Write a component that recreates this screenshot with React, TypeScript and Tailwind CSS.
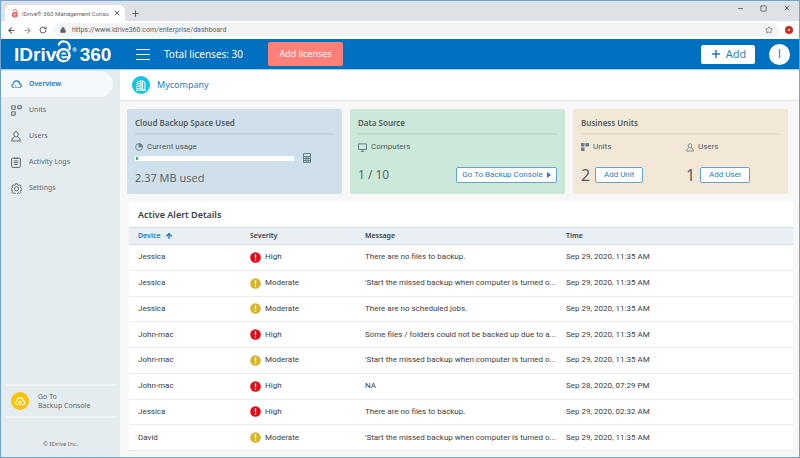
import type { ReactNode, SVGProps } from "react";
import { ArrowLeft, ArrowRight, ArrowUp, Lock, Minus, Plus, RotateCw, Square, Star, X } from "lucide-react";

type Severity = "High" | "Moderate";

const alerts: { device: string; severity: Severity; message: string; time: string }[] = [
  { device: "Jessica", severity: "High", message: "There are no files to backup.", time: "Sep 29, 2020, 11:35 AM" },
  { device: "Jessica", severity: "Moderate", message: "'Start the missed backup when computer is turned o...", time: "Sep 29, 2020, 11:35 AM" },
  { device: "Jessica", severity: "Moderate", message: "There are no scheduled jobs.", time: "Sep 29, 2020, 11:35 AM" },
  { device: "John-mac", severity: "High", message: "Some files / folders could not be backed up due to a...", time: "Sep 29, 2020, 11:35 AM" },
  { device: "John-mac", severity: "Moderate", message: "'Start the missed backup when computer is turned o...", time: "Sep 29, 2020, 11:35 AM" },
  { device: "John-mac", severity: "High", message: "NA", time: "Sep 28, 2020, 07:29 PM" },
  { device: "Jessica", severity: "High", message: "There are no files to backup.", time: "Sep 29, 2020, 02:32 AM" },
  { device: "David", severity: "Moderate", message: "'Start the missed backup when computer is turned o...", time: "Sep 29, 2020, 11:35 AM" },
];

function Icon(props: SVGProps<SVGSVGElement>) {
  return <svg fill="none" stroke="currentColor" aria-hidden="true" {...props} />;
}

const CloudDotsIcon = () => (
  <Icon viewBox="0 0 12 10" className="h-[9px] w-[11px] shrink-0" strokeWidth="1.2" strokeLinecap="round">
    <path d="M2.600 8.200C.2 7.600.3 4.800 2.600 4.500 2.600 2 4.200 1 6 1s3.200 1.200 3.400 3c2.200.3 2.600 3.500.4 4.200" />
    <path d="M4.500 8.400h.1M6.200 8.400h.1M8 8.400h.1M4.800 6.300h.1" />
  </Icon>
);

const UnitsIcon = () => (
  <Icon viewBox="0 0 11 11" className="h-[11px] w-[11px] shrink-0" strokeWidth="1.1">
    <rect x=".8" y=".8" width="3.400" height="3.400" rx=".6" />
    <rect x="6.800" y=".8" width="3.400" height="3" rx=".6" />
    <rect x=".8" y="6.800" width="3.400" height="3.400" rx=".6" />
  </Icon>
);

const UserIcon = ({ className }: { className: string }) => (
  <Icon viewBox="0 0 10 11" className={className} strokeWidth="1" strokeLinejoin="round">
    <ellipse cx="5" cy="3.300" rx="2.200" ry="2.700" />
    <path d="M3.600 5.600 1.300 7.300.7 10h8.600l-.6-2.700-2.300-1.700" />
  </Icon>
);

const ClipboardIcon = () => (
  <Icon viewBox="0 0 10 11" className="h-[11px] w-[10px] shrink-0" strokeWidth="1">
    <rect x=".7" y="1.200" width="8.600" height="9.200" rx=".8" />
    <path d="M3.200 1.200h3.600M2.700 4h4.600M2.700 5.800h4.600M3.400 7.600h3" />
  </Icon>
);

const GearIcon = () => (
  <Icon viewBox="0 0 24 24" className="h-[11px] w-[11px] shrink-0" strokeWidth="2" strokeLinejoin="round">
    <path d="M10 1.500h4l.6 3 2.300 1 2.600-1.700 2.800 2.800-1.700 2.600 1 2.300 2.400.5v3.500l-3 .5-1 2.100 1.600 2.400-2.800 2.800-2.500-1.700-2.100.9-.6 2.500h-3.800l-.6-2.600-2.200-1-2.400 1.700-2.800-2.800 1.700-2.500-.9-2-2.600-.6v-3.500l2.600-.5 1-2.200-1.700-2.500 2.800-2.800 2.500 1.700 2.100-1z" />
    <circle cx="12" cy="12.600" r="4.500" />
  </Icon>
);

const navItems: { label: string; icon: ReactNode; active?: boolean }[] = [
  { label: "Overview", icon: <CloudDotsIcon />, active: true },
  { label: "Units", icon: <UnitsIcon /> },
  { label: "Users", icon: <UserIcon className="h-[11px] w-[10px] shrink-0" /> },
  { label: "Activity Logs", icon: <ClipboardIcon /> },
  { label: "Settings", icon: <GearIcon /> },
];

function LockMark({ className, cutout }: { className: string; cutout: string }) {
  return (
    <svg viewBox="0 0 16 24" fill="none" className={className} aria-hidden="true">
      <path d="M2.500 5.500C3.500 2.600 6 1.200 8.500 1.500c4 .5 6 4 4.800 8.500" stroke="currentColor" strokeWidth="2.200" />
      <circle cx="7.500" cy="15.200" r="7.300" fill="currentColor" />
      <path d="M4 15.400h7.300c0-5.300-7.300-5.300-7.300 0 0 4 4.200 4.800 6.900 2.900" className={cutout} strokeWidth="1.700" />
    </svg>
  );
}

function BrowserChrome() {
  return (
    <div className="shrink-0 text-[7px] text-[#5f6368]">
      <div className="flex h-5 items-end bg-[#dee1e6] pl-1">
        <div className="flex h-4 w-[120px] items-center rounded-t-md bg-white pr-1 pl-[7px]">
          <LockMark className="h-[9px] w-1.5 shrink-0 text-[#e03a3e]" cutout="stroke-white" />
          <span className="ml-1 flex-1 font-['Roboto','Noto_Sans',sans-serif] text-[6px] whitespace-nowrap">IDrive® 360 Management Conso</span>
          <button aria-label="Close tab"><X className="size-[8px]" strokeWidth={3} /></button>
        </div>
        <button aria-label="New tab" className="mb-[3px] ml-1.5"><Plus className="size-[9px]" strokeWidth={3} /></button>
        <div className="mb-[9px] ml-auto flex gap-4 pr-2">
          <button aria-label="Minimize"><Minus className="size-[7px]" strokeWidth={3} /></button>
          <button aria-label="Maximize"><Square className="size-[7px]" strokeWidth={3} /></button>
          <button aria-label="Close"><X className="size-[8px]" strokeWidth={3} /></button>
        </div>
      </div>
      <div className="flex h-[18px] items-center bg-white pr-1.5 pl-1.5">
        <button aria-label="Back"><ArrowLeft className="size-[9px]" strokeWidth={3} /></button>
        <button aria-label="Forward" className="ml-[7px] text-[#a5a8ac]"><ArrowRight className="size-[9px]" strokeWidth={3} /></button>
        <button aria-label="Reload" className="ml-[7px]"><RotateCw className="size-[8px]" strokeWidth={3} /></button>
        <div className="ml-[7px] flex h-[14px] flex-1 items-center rounded-full bg-[#f1f3f4] px-1.5">
          <Lock className="size-[6px] shrink-0 fill-current" strokeWidth={3} />
          <input aria-label="Address" readOnly value="https://www.idrive360.com/enterprise/dashboard" className="ml-1.5 min-w-0 flex-1 bg-transparent font-['Roboto','Noto_Sans',sans-serif] outline-none" />
          <Star className="size-[8px] shrink-0" strokeWidth={2} />
        </div>
        <span className="ml-1.5 size-2 rounded-full border-[3px] border-[#d02a22] bg-white" />
      </div>
    </div>
  );
}

function Header() {
  return (
    <header className="flex h-[31px] shrink-0 items-center border-b border-[#a9cde8] bg-[#0070c0] pr-[9px] pl-[13px] text-white">
      <a href="#home" aria-label="IDrive 360" className="flex w-[122px] items-center font-['Liberation_Sans',sans-serif] text-[19px] leading-none font-bold">
        <span>IDriv</span>
        <LockMark className="mb-1 h-6 w-4" cutout="stroke-[#0070c0]" />
        <span className="mb-2 text-[6px]">®</span>
        <span className="ml-[3px]">360</span>
      </a>
      <button aria-label="Menu" className="flex w-[14px] flex-col gap-1">
        <span className="h-px bg-white" />
        <span className="h-px bg-white" />
        <span className="h-px bg-white" />
      </button>
      <span className="ml-[14px] w-[104px] text-[10px]">Total licenses: 30</span>
      <button className="h-6 w-[75px] rounded-xs bg-[#ff7f79] font-['Open_Sans',sans-serif] text-[9px]">Add licenses</button>
      <button className="ml-auto flex h-[19px] w-[54px] items-center justify-center gap-1 rounded-xs bg-white font-['Open_Sans',sans-serif] text-[11px] text-[#2478bd]">
        <Plus className="size-[12px]" strokeWidth={3} />
        Add
      </button>
      <button aria-label="Account" className="ml-[14px] size-[21px] rounded-full bg-white font-['Open_Sans',sans-serif] text-[12px] text-[#2478bd]">I</button>
    </header>
  );
}

function Sidebar() {
  return (
    <aside className="flex w-[119px] shrink-0 flex-col bg-[#e4ecef] text-[7px] text-[#5f676c]">
      <nav className="flex flex-col pt-px">
        {navItems.map((item) => (
          <a
            key={item.label}
            href={"#" + item.label}
            className={
              item.active
                ? "mr-[7px] flex h-[26px] items-center rounded-r-full bg-[#f5f9fc] font-semibold text-[#1c77bd]"
                : "flex h-[26px] items-center"
            }
          >
            <span className="ml-[10px] w-[18px]">{item.icon}</span>
            {item.label}
          </a>
        ))}
      </nav>
      <div className="mt-auto px-1">
        <a href="#console" className="flex h-[34px] items-center border-y-2 border-[#f1f5f7] pl-1.5">
          <span className="mr-[9px] flex size-[18px] items-center justify-center rounded-full bg-[#fdc30a] text-white">
            <Icon viewBox="0 0 12 10" className="h-[9px] w-[12px]" strokeWidth="1.200">
              <path d="M4 8.500H2.800C.2 8.300.2 5 2.500 4.700 2.700 2.200 4.200 1 6 1s3.300 1.200 3.500 3.300c2.500.3 2.500 4-.3 4.200H8M6 9.500V5M4.300 6.600 6 4.900l1.700 1.700" />
            </Icon>
          </span>
          <span className="flex flex-col leading-[9px]"><span>Go To</span><span>Backup Console</span></span>
        </a>
      </div>
      <p className="mt-[21px] mb-2 text-center text-[6px] leading-[10px]">© IDrive Inc.</p>
    </aside>
  );
}

function Card({ title, tone, children }: { title: string; tone: string; children: ReactNode }) {
  return (
    <section className={"flex h-[85px] min-w-0 flex-1 flex-col rounded-xs px-2 pt-[7px] pb-[11px] text-[#555c60] " + tone}>
      <h2 className="border-b-2 border-black/5 pb-1 text-[8px] leading-[13px] font-semibold">{title}</h2>
      {children}
    </section>
  );
}

const cardLabel = "mt-[6px] flex items-center gap-1 font-['Roboto',sans-serif] text-[8px] leading-3";
const cardButton = "flex h-4 items-center justify-center rounded-xs border border-[#5fa5d3] bg-white font-['Roboto',sans-serif] text-[8px] text-[#2a7dbf]";

function BuildingBadge() {
  return (
    <span className="flex size-[18px] items-center justify-center rounded-full bg-[#12c4e8] text-white">
      <Icon viewBox="0 0 12 12" className="size-3" strokeWidth="1">
        <path d="M1 4 6 1.500v9.500M1 6l5-2M1 8l5-1.500M1 10l5-1M7.500 1.500 10 3.500V11H7.500zM1 11.300h10" />
      </Icon>
    </span>
  );
}

function Cards() {
  return (
    <div className="flex gap-2 pr-[11px] pl-[7px]">
      <Card title="Cloud Backup Space Used" tone="bg-[#cfdfeb]">
        <p className={cardLabel}>
          <Icon viewBox="0 0 9 9" className="size-2 text-[#64808c]" strokeWidth="1">
            <circle cx="4.500" cy="4.500" r="3.800" />
            <path d="M4.500.7v3.800h3.800A3.800 3.800 0 0 0 4.500.7" fill="currentColor" />
          </Icon>
          Current usage
        </p>
        <div className="flex items-center gap-[9px]">
          <div className="h-[5px] w-[159px] bg-white p-px"><div className="h-full w-0.5 bg-[#2bc04f]" /></div>
          <Icon viewBox="0 0 8 10" className="h-[10px] w-2 text-[#64808c]" strokeWidth="1">
            <path d="M.5.5h7v9h-7zM.5 3.500h7M.5 5.500h7M.5 7.500h7M3 3.500v6M5.200 3.500v6" />
          </Icon>
        </div>
        <p className="mt-auto font-['Open_Sans',sans-serif] text-[11px] leading-[10px]">2.37 MB used</p>
      </Card>
      <Card title="Data Source" tone="bg-[#cce8d9]">
        <p className={cardLabel}>
          <Icon viewBox="0 0 9 9" className="size-[9px] text-[#64808c]" strokeWidth="1">
            <path d="M.5.9h8v5.600h-8zM2.700 8.300h3.600M4.500 6.500v2" />
          </Icon>
          Computers
        </p>
        <div className="mt-auto flex items-center justify-between">
          <span className="font-['Open_Sans',sans-serif] text-[12px] leading-4">1 / 10</span>
          <button className={cardButton + " w-[101px] gap-1"}>
            Go To Backup Console
            <svg viewBox="0 0 4 6" className="h-[6px] w-1" fill="currentColor" aria-hidden="true"><path d="M0 0l4 3-4 3z" /></svg>
          </button>
        </div>
      </Card>
      <Card title="Business Units" tone="bg-[#f3e8d7]">
        <div className="grid flex-1 grid-cols-[105px_1fr]">
          <div className="flex flex-col">
            <p className={cardLabel}>
              <svg viewBox="0 0 9 9" className="size-2 text-[#64808c]" fill="currentColor" aria-hidden="true"><path d="M0 0h4v4H0zM5 0h4v4H5zM0 5h4v4H0z" /></svg>
              Units
            </p>
            <div className="mt-auto flex items-center gap-[5px]">
              <span className="text-[16px] leading-4">2</span>
              <button className={cardButton + " w-12"}>Add Unit</button>
            </div>
          </div>
          <div className="flex flex-col">
            <p className={cardLabel}>
              <UserIcon className="h-[9px] w-2 text-[#64808c]" />
              Users
            </p>
            <div className="mt-auto flex items-center gap-[5px]">
              <span className="text-[16px] leading-4">1</span>
              <button className={cardButton + " w-[50px]"}>Add User</button>
            </div>
          </div>
        </div>
      </Card>
    </div>
  );
}

function SeverityIcon({ severity }: { severity: Severity }) {
  return (
    <svg viewBox="0 0 11 11" className="size-[11px] shrink-0" aria-hidden="true">
      <circle cx="5.500" cy="5.500" r="5.300" fill={severity === "High" ? "#e30b17" : "#d9b52b"} />
      <path d="M5.500 2.300v4M5.500 7.500v1.200" stroke="#fff" strokeWidth="1.300" />
    </svg>
  );
}

function AlertTable() {
  return (
    <section className="mt-2 mr-[6px] mb-[6px] ml-[9px] bg-white text-[#3c4043]">
      <h2 className="flex h-[25px] items-center pl-[9px] text-[9px] font-semibold">Active Alert Details</h2>
      <table className="h-[224px] w-full table-fixed border-collapse text-left font-['Roboto',sans-serif] text-[8px] leading-[10px] whitespace-nowrap">
        <thead className="bg-[#e9eff3] font-['Noto_Sans',sans-serif]">
          <tr className="h-[17px] border-y border-[#c9dfeb]">
            <th scope="col" className="w-[121px] p-0 pl-[9px] text-[7px] font-semibold text-[#1c77bd]">
              <button className="flex items-center gap-1">Device <ArrowUp className="size-2" strokeWidth={4} /></button>
            </th>
            <th scope="col" className="w-[115px] p-0 text-[7px] font-semibold">Severity</th>
            <th scope="col" className="w-[201px] p-0 text-[7px] font-semibold">Message</th>
            <th scope="col" className="p-0 text-[7px] font-semibold">Time</th>
          </tr>
        </thead>
        <tbody>
          {alerts.map((alert, index) => (
            <tr key={index} className="border-b border-[#ebebeb]">
              <td className="p-0 pl-[9px]">{alert.device}</td>
              <td className="p-0"><span className="flex items-center gap-1"><SeverityIcon severity={alert.severity} />{alert.severity}</span></td>
              <td className="p-0">{alert.message}</td>
              <td className="p-0">{alert.time}</td>
            </tr>
          ))}
        </tbody>
      </table>
    </section>
  );
}

export default function App() {
  return (
    <div className="flex min-h-screen flex-col border border-[#6fa5d2] font-['Noto_Sans','Open_Sans',sans-serif]">
      <BrowserChrome />
      <Header />
      <div className="flex flex-1">
        <Sidebar />
        <main className="min-w-0 flex-1 bg-[#f7f7f7]">
          <div className="mb-2 flex h-[31px] items-center gap-[7px] border-b border-[#d5e5ef] bg-white pl-3 text-[9px] text-[#2a7dbf]">
            <BuildingBadge />
            <h1>Mycompany</h1>
          </div>
          <Cards />
          <AlertTable />
        </main>
      </div>
    </div>
  );
}
